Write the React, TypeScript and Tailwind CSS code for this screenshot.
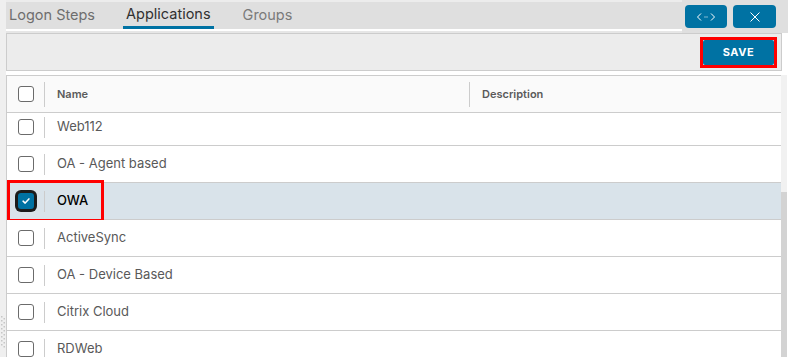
import React from "react";

const apps = [
  "Web112",
  "OA - Agent based",
  "OWA",
  "ActiveSync",
  "OA - Device Based",
  "Citrix Cloud",
  "RDWeb",
];

function Checkbox({ checked = false }: { checked?: boolean }) {
  if (checked) {
    return (
      <div className="flex h-4 w-4 items-center justify-center rounded-[3px] bg-[#0072a3] ring-[3px] ring-[#1c1c1c]">
        <svg viewBox="0 0 12 12" className="h-[10px] w-[10px]" fill="none">
          <path d="M2.5 6.2 L5 8.5 L9.5 3.5" stroke="white" strokeWidth="1.8" strokeLinecap="round" strokeLinejoin="round" />
        </svg>
      </div>
    );
  }
  return <div className="h-4 w-4 rounded-[3px] border-[1.5px] border-[#6b6b6b] bg-white" />;
}

export default function App() {
  return (
    <div className="flex h-[357px] w-[788px] overflow-hidden bg-white font-['Inter',sans-serif]">
      {/* left resize strip */}
      <div className="flex w-[6px] flex-col justify-end bg-[#efefef] pb-[9px]">
        <svg width="4" height="32" viewBox="0 0 4 32" className="ml-[1px]">
          {Array.from({ length: 8 }).map((_, i) => (
            <g key={i} fill="#c6c6c6">
              <rect x="0" y={i * 4} width="1.5" height="1.5" />
              <rect x="2.5" y={i * 4 + 2} width="1.5" height="1.5" />
            </g>
          ))}
        </svg>
      </div>

      <div className="flex min-w-0 flex-1 flex-col">
        {/* tabs */}
        <div className="flex h-[33px] bg-[#e6e6e6]">
          <div className="flex flex-1 flex-col">
            <div className="flex h-[29px] items-end gap-[25px] border-t-2 border-[#ececec] bg-[#dfdfdf]">
              <div className="flex h-full items-center px-[3px] pb-[2px] text-[14.5px] text-[#6e6e6e]">Logon Steps</div>
              <div className="flex h-full items-center border-b-[3px] border-[#0072a3] px-[3px] text-[14.5px] text-[#313131]">Applications</div>
              <div className="flex h-full items-center px-1 pb-[2px] text-[14.5px] text-[#7a7a7a]">Groups</div>
            </div>
            <div className="h-[2px] bg-white" />
          </div>
          <div className="flex gap-[6px] bg-[#dfdfdf] pl-[3px] pr-[12px] pt-[5px]">
            <button className="flex h-[23px] w-[42px] items-center justify-center rounded-[4px] bg-[#0072a3]">
              <svg viewBox="0 0 20 10" className="h-[10px] w-[20px]" fill="none" stroke="white" strokeWidth="1">
                <path d="M5 1.5 L1.5 5 L5 8.5 M15 1.5 L18.5 5 L15 8.5" />
                <path d="M8 5 H12" strokeOpacity="0.5" />
              </svg>
            </button>
            <button className="flex h-[23px] w-[43px] items-center justify-center rounded-[4px] bg-[#0072a3]">
              <svg viewBox="0 0 12 12" className="h-[12px] w-[12px]" fill="none" stroke="white" strokeWidth="1">
                <path d="M1.5 1.5 L10.5 10.5 M10.5 1.5 L1.5 10.5" />
              </svg>
            </button>
          </div>
        </div>

        {/* toolbar */}
        <div className="mr-[6px] flex h-[38px] items-center justify-end border border-[#cccccc] bg-[#ececec] pr-[4px]">
          <div className="border-[3px] border-[#ff0000]">
            <button className="flex h-[25px] w-[71px] items-center justify-center rounded-[2px] bg-[#0072a3] text-[11px] font-bold tracking-[0.6px] text-white">
              SAVE
            </button>
          </div>
        </div>

        {/* table */}
        <div className="mt-[4px] flex min-h-0 flex-1">
          <div className="flex min-w-0 flex-1 flex-col border-l border-t border-[#cccccc]">
            <div className="flex h-[37px] shrink-0 items-center border-b border-[#cccccc] bg-[#fafafa]">
              <div className="flex w-[37px] justify-center pl-[1px]">
                <Checkbox />
              </div>
              <div className="h-[25px] w-px bg-[#cccccc]" />
              <div className="w-[424px] pl-3 text-[11px] font-semibold text-[#5a5a5a]">Name</div>
              <div className="h-[25px] w-px bg-[#cccccc]" />
              <div className="pl-3 text-[11px] font-semibold text-[#5a5a5a]">Description</div>
            </div>
            <div className="min-h-0 flex-1 overflow-hidden">
              <div className="-mt-[4px]">
                {apps.map((name) => {
                  const selected = name === "OWA";
                  return (
                    <div
                      key={name}
                      className={`relative flex h-[37px] items-center border-b border-[#cccccc] ${selected ? "bg-[#d9e3ea]" : "bg-white"}`}
                    >
                      <div className="flex w-[37px] justify-center pl-[1px]">
                        <Checkbox checked={selected} />
                      </div>
                      <div className="h-[21px] w-px bg-[#cccccc]" />
                      <div className={`w-[424px] pl-3 text-[13px] ${selected ? "font-medium text-black" : "text-[#595959]"}`}>
                        {name}
                      </div>
                      <div className="flex-1" />
                      {selected && (
                        <div className="pointer-events-none absolute left-0 top-[-3px] h-[42px] w-[97px] border-[3px] border-[#ff0000]" />
                      )}
                    </div>
                  );
                })}
              </div>
            </div>
          </div>
          {/* scrollbar */}
          <div className="mr-[1px] flex w-[6px] flex-col bg-[#f1f1f1]">
            <div className="h-[117px]" />
            <div className="flex-1 bg-[#d3d3d3]" />
          </div>
        </div>
      </div>
    </div>
  );
}
